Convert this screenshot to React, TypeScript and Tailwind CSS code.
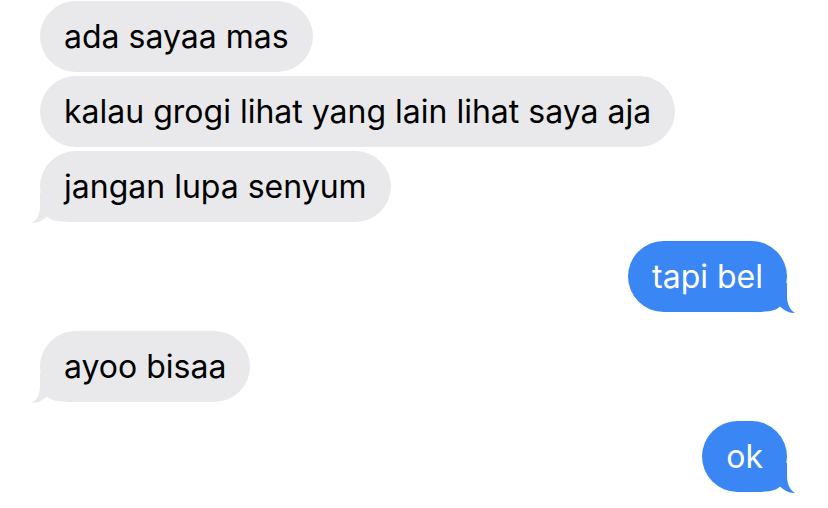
import React from "react";

const GRAY = "#e9e9eb";
const BLUE = "#3b86f5";

function Tail({ side, color }: { side: "left" | "right"; color: string }) {
  return (
    <svg
      width="44"
      height="30"
      viewBox="0 0 44 30"
      className={
        side === "left"
          ? "absolute left-[-8px] bottom-[-1px]"
          : "absolute right-[-8px] bottom-[-1px] -scale-x-100"
      }
    >
      <path
        d="M8 0 L8 13 C8 21 5 27 0 30 C6 30.2 11 27.5 15 23.5 C19 27.5 25 29 44 29 L44 0 Z"
        fill={color}
      />
    </svg>
  );
}

function Received({ text, tail }: { text: string; tail?: boolean }) {
  return (
    <div className="flex justify-start">
      <div className="relative h-[71px] rounded-[36px] bg-[#e9e9eb] pl-[24px] pr-[24px] flex items-center text-black">
        {tail && <Tail side="left" color={GRAY} />}
        <span className="relative">{text}</span>
      </div>
    </div>
  );
}

function Sent({ text }: { text: string }) {
  return (
    <div className="flex justify-end">
      <div className="relative h-[71px] rounded-[36px] bg-[#3b86f5] pl-[24px] pr-[24px] flex items-center text-white">
        <Tail side="right" color={BLUE} />
        <span className="relative">{text}</span>
      </div>
    </div>
  );
}

export default function App() {
  return (
    <div
      className="w-[828px] h-[508px] bg-white overflow-hidden pt-[1px] pl-[40px] pr-[41px] text-[32px] leading-[38px]"
      style={{ fontFamily: "Inter, 'Noto Sans', sans-serif" }}
    >
      <div className="flex flex-col gap-[4px]">
        <Received text="ada sayaa mas" />
        <Received text="kalau grogi lihat yang lain lihat saya aja" />
        <Received text="jangan lupa senyum" tail />
      </div>
      <div className="mt-[19px]">
        <Sent text="tapi bel" />
      </div>
      <div className="mt-[19px]">
        <Received text="ayoo bisaa" tail />
      </div>
      <div className="mt-[19px]">
        <Sent text="ok" />
      </div>
    </div>
  );
}
